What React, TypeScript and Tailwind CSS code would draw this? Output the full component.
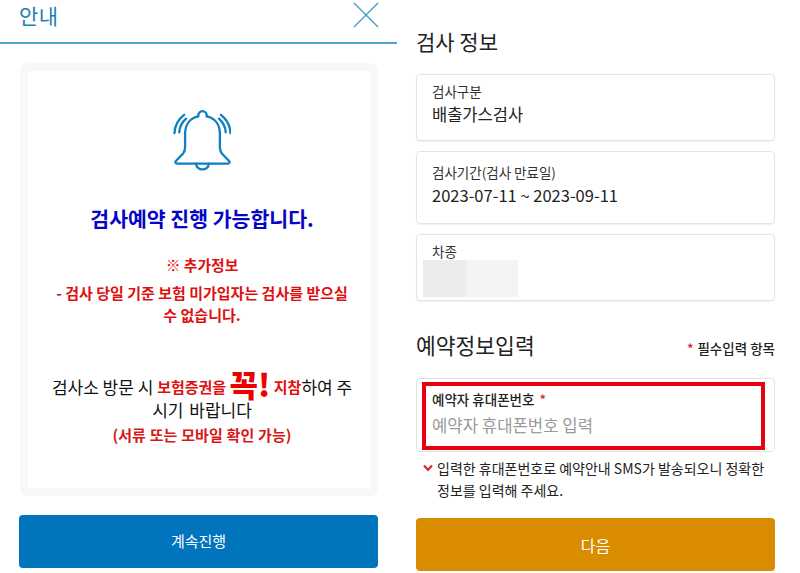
const font = { fontFamily: '"Noto Sans CJK KR", "Noto Sans", sans-serif' };

function Bell() {
  return (
    <svg viewBox="0 0 60 66" className="w-[58px] h-[66px]" fill="none" stroke="#0f7fc0" strokeWidth="2.400" strokeLinecap="round" strokeLinejoin="round">
      <path d="M26 9.500c0-7 9-7 9 0" />
      <path d="M26 9.500c-7 1.500-13 7-13.500 17v15c0 3-.5 4.500-2 6.500l-7.300 7.500c-1.300 1.500-.8 3 1 3h52.600c1.800 0 2.300-1.500 1-3l-7.300-7.500c-1.500-2-2-3.500-2-6.500v-15c-.5-10-6.500-15.500-13.500-17" />
      <path d="M24 58.500c0 3.500 3 6 6.500 6s6.500-2.500 6.500-6" />
      <path d="M1.500 27c.3-7.500 4-14.500 10-19" />
      <path d="M6.500 26c.3-5.500 3-10.500 7-14" />
      <path d="M59.500 27c-.3-7.500-4-14.500-10-19" />
      <path d="M54.500 26c-.3-5.500-3-10.500-7-14" />
    </svg>
  );
}

function InfoCard({ label, value, h, labelClass, valueClass }: { label: string; value: string; h: string; labelClass: string; valueClass: string }) {
  return (
    <div className={`${h} rounded-[4px] border border-[#e4e4e4] pl-[15px] shadow-[0_1px_1px_#f0f0f0]`}>
      <div className={`text-[13.500px] leading-[18px] text-[#333] ${labelClass}`}>{label}</div>
      <div className={`text-[16.500px] leading-[24px] text-[#222] ${valueClass}`}>{value}</div>
    </div>
  );
}

export default function App() {
  return (
    <div style={font} className="w-[800px] h-[573px] overflow-hidden bg-white flex">
      <div className="w-[397px] shrink-0 flex flex-col">
        <div className="h-[44px] border-b-2 border-[#4ea6d0] flex items-start justify-between pl-[19px] pr-[18px]">
          <span className="text-[21px] leading-[31px] tracking-[0.5px] text-[#1c80b4]">안내</span>
          <svg viewBox="0 0 26 26" className="w-[26px] h-[26px] mt-[2px]" stroke="#4a9bc7" strokeWidth="1.400" fill="none">
            <path d="M1 1L25 25M25 1L1 25" />
          </svg>
        </div>
        <div className="ml-[20px] mr-[19px] mt-[19px] h-[433px] rounded-[8px] bg-[#f8f8f8] p-[8px]">
          <div className="h-full bg-white flex flex-col items-center pl-[24px] pr-[18px] text-center">
            <div className="mt-[35px]"><Bell /></div>
            <div className="mt-[32px] text-[20.500px] leading-[28px] font-bold text-[#0505c8]">검사예약 진행 가능합니다.</div>
            <div className="mt-[22px] text-[14.800px] leading-[22px] font-bold text-[#e01010]">※ 추가정보</div>
            <div className="mt-[6px] text-[15px] leading-[22px] font-bold text-[#e01010]">- 검사 당일 기준 보험 미가입자는 검사를 받으실 수 없습니다.</div>
            <div className="mt-[29px] h-[50px] text-[17px] leading-[26px] text-[#111] whitespace-nowrap flex items-end justify-center">
              <span className="mb-[5px]">검사소 방문 시&nbsp;</span>
              <span className="mb-[5px] text-[15px] font-bold text-[#e01010]">보험증권을&nbsp;</span>
              <span className="text-[31px] leading-[42px] font-black text-[#ee0000]">꼭!</span>
              <span className="mb-[5px] text-[15px] font-bold text-[#e01010]">&nbsp;지참</span>
              <span className="mb-[5px]">하여 주</span>
            </div>
            <div className="text-[17px] leading-[26px] text-[#111] -mt-[8px] [word-spacing:2px]">시기 바랍니다</div>
            <div className="text-[15px] leading-[24px] font-bold text-[#d81818] [word-spacing:0.500px]">(서류 또는 모바일 확인 가능)</div>
          </div>
        </div>
        <div className="ml-[19px] mr-[19px] mt-[19px] h-[53px] rounded-[4px] bg-[#0074bd] flex items-center justify-center text-[15px] text-white">계속진행</div>
      </div>

      <div className="flex-1 pl-[19px] pr-[25px] flex flex-col">
        <div className="mt-[26px] h-[30px] text-[21px] leading-[30px] text-[#222]">검사 정보</div>
        <div className="mt-[18px] flex flex-col gap-[10px]">
          <InfoCard label="검사구분" value="배출가스검사" h="h-[67px]" labelClass="pt-[7px]" valueClass="mt-[2px]" />
          <InfoCard label="검사기간(검사 만료일)" value="2023-07-11 ~ 2023-09-11" h="h-[73px]" labelClass="pt-[11px]" valueClass="mt-[2px]" />
          <div className="h-[67px] relative rounded-[4px] border border-[#e4e4e4] pl-[15px] shadow-[0_1px_1px_#f0f0f0]">
            <div className="text-[13.500px] leading-[18px] text-[#333] pt-[7px]">차종</div>
            <div className="absolute left-[6px] top-[25px] w-[95px] h-[37px] flex">
              <div className="w-[43px] bg-[#ececec]" />
              <div className="flex-1 bg-[#f4f4f4]" />
            </div>
          </div>
        </div>
        <div className="mt-[28px] h-[34px] flex items-center justify-between">
          <span className="text-[21.500px] leading-[34px] -mt-[2px] text-[#222]">예약정보입력</span>
          <span className="text-[13.500px] leading-[20px] text-[#222] font-medium mt-[4px]"><span className="text-[#d8202c] mr-[4px]">*</span>필수입력 항목</span>
        </div>
        <div className="mt-[15px] h-[74px] relative rounded-[4px] border border-[#e4e4e4] pl-[15px]">
          <div className="absolute left-[5px] top-[3px] w-[343px] h-[68px] border-[4px] border-[#e8000f]" />
          <div className="pt-[11px] text-[13.500px] leading-[18px] font-medium text-[#222]">예약자 휴대폰번호 <span className="text-[#d8202c] ml-[2px]">*</span></div>
          <div className="mt-[5px] text-[16.700px] leading-[24px] text-[#9a9a9a]">예약자 휴대폰번호 입력</div>
        </div>
        <div className="mt-[5px] flex items-start">
          <svg viewBox="0 0 10 8" className="w-[10px] h-[8px] ml-[7px] mt-[7px] shrink-0" fill="none" stroke="#d8283c" strokeWidth="2.200">
            <path d="M1 1.500L5 5.800L9 1.500" />
          </svg>
          <div className="ml-[4px] text-[14px] leading-[22px] text-[#222] break-keep">입력한 휴대폰번호로 예약안내 SMS가 발송되오니 정확한 정보를 입력해 주세요.</div>
        </div>
        <div className="mt-[17px] h-[53px] rounded-[4px] bg-[#d98c00] flex items-center justify-center text-[16px] text-white">다음</div>
      </div>
    </div>
  );
}
